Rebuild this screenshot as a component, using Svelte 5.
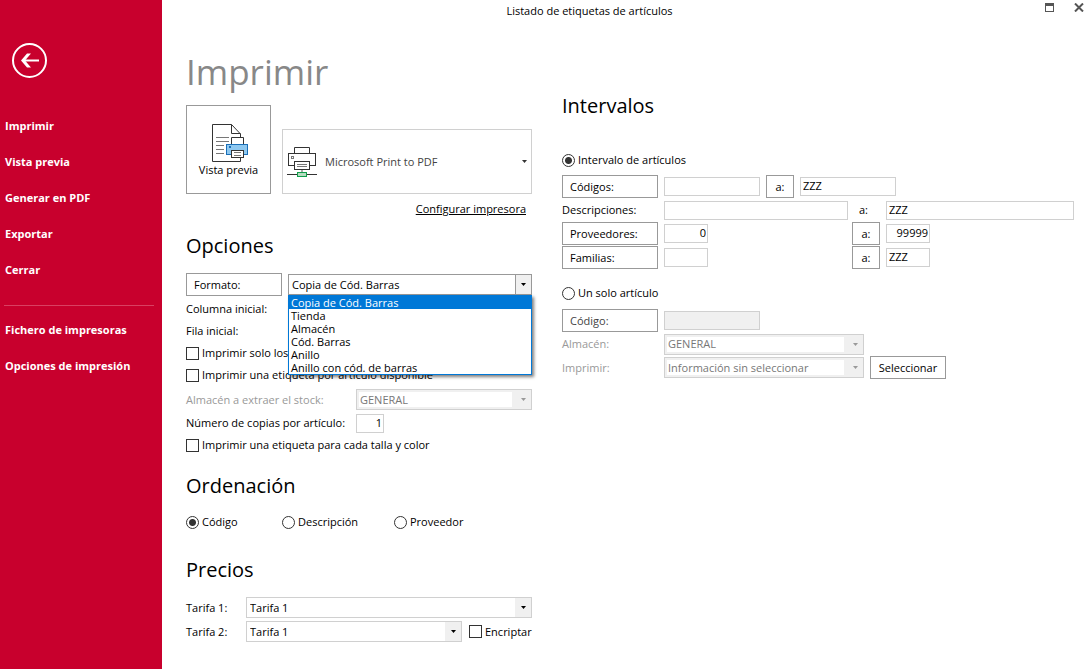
<script>
	const acciones = ['Imprimir', 'Vista previa', 'Generar en PDF', 'Exportar', 'Cerrar'];
	const ajustes = ['Fichero de impresoras', 'Opciones de impresión'];
	const formatos = ['Copia de Cód. Barras', 'Tienda', 'Almacén', 'Cód. Barras', 'Anillo', 'Anillo con cód. de barras'];
	const ordenes = ['Código', 'Descripción', 'Proveedor'];

	let formato = $state(formatos[0]);
	let listaAbierta = $state(true);
	let orden = $state('Código');
	let intervalo = $state('varios');
	let copias = $state('1');

	const abrirLista = e => {
		e.preventDefault();
		listaAbierta = !listaAbierta;
	}

	const elegirFormato = f => {
		formato = f;
		listaAbierta = false;
	}
</script>

<div class="app">
	<aside>
		<button class="back" aria-label="Volver">
			<svg width="35" height="35" viewBox="0 0 35 35" fill="none" stroke="#fff">
				<circle cx="17.5" cy="17.5" r="16.5" stroke-width="2" />
				<path d="M27 17.5H11" stroke-width="2" />
				<path d="M9 17.5L15 10.5H19L13 17.5L19 24.5H15Z" fill="#fff" stroke="none" />
			</svg>
		</button>
		<nav>
			{#each acciones as accion}
				<a href="#menu">{accion}</a>
			{/each}
			<hr />
			{#each ajustes as ajuste}
				<a href="#menu">{ajuste}</a>
			{/each}
		</nav>
	</aside>

	<main>
		<header>
			<span class="caption">Listado de etiquetas de artículos</span>
			<button class="win" aria-label="Maximizar">
				<svg width="9" height="9" viewBox="0 0 9 9" shape-rendering="crispEdges">
					<path d="M0 0H9V9H0ZM1 3V8H8V3Z" fill="#555" fill-rule="evenodd" />
				</svg>
			</button>
			<button class="win" aria-label="Cerrar ventana">
				<svg width="10" height="9" viewBox="0 0 10 9">
					<path d="M1 .5L9 8.5M9 .5L1 8.5" stroke="#555" stroke-width="2" />
				</svg>
			</button>
		</header>

		<div class="columns">
			<div class="left">
				<h1>Imprimir</h1>
				<div class="print-row">
					<button class="preview">
						<svg width="37" height="39" viewBox="0 0 37 39" fill="none" stroke="#333">
							<path d="M.5 .5H19.5L28.5 10V37.5H.5Z" fill="#fff" />
							<path d="M19.5 .5V9.5H28.5" />
							<path d="M4 13.5H17M4 17.5H17M4 21.5H12M4 25.5H12M4 29.5H12" stroke="#777" />
							<path d="M19.5 20V13.5H31.5V20" fill="#fff" />
							<rect x="14.5" y="20.5" width="21" height="10" fill="#8ec8f0" stroke="#1a6fb8" />
							<rect x="17" y="22" width="2" height="2" fill="#1a6fb8" stroke="none" />
							<rect x="19.5" y="26.5" width="12" height="7" fill="#fff" />
							<path d="M22 28.5H29M22 31.5H29" stroke="#777" />
						</svg>
						Vista previa
					</button>
					<button class="printer">
						<svg width="30" height="30" viewBox="0 0 30 30" fill="none" stroke="#333">
							<path d="M7.5 6V.5H22.5V6" />
							<rect x="1.5" y="6.5" width="27" height="12" fill="#fff" />
							<rect x="4.5" y="9.5" width="2" height="2" stroke="#777" />
							<rect x="7.5" y="14.5" width="15" height="8" fill="#fff" />
							<path d="M10 17.5H20M10 19.5H20" stroke="#777" />
							<path d="M15 23V25" stroke="#aaa" stroke-width="2" />
							<path d="M0 27.5H30" />
							<rect x="10.5" y="25.5" width="9" height="4" fill="#b5dcc0" stroke="#0f9d4a" />
						</svg>
						<span>Microsoft Print to PDF</span>
						<svg class="caret" width="5" height="3" viewBox="0 0 5 3"><path d="M0 0H5L2.5 3Z" fill="#333" /></svg>
					</button>
				</div>
				<a class="config" href="#impresora">Configurar impresora</a>

				<section class="options">
					<h2>Opciones</h2>
					<div class="line format">
						<button class="box label">Formato:</button>
						<div class="combo">
							<select class="dark" aria-label="Formato" bind:value={formato} onmousedown={abrirLista}>
								{#each formatos as f}
									<option>{f}</option>
								{/each}
							</select>
							{#if listaAbierta}
								<ul role="listbox">
									{#each formatos as f}
										<li role="option" aria-selected={f === formato}>
											<button onclick={() => elegirFormato(f)}>{f}</button>
										</li>
									{/each}
								</ul>
							{/if}
						</div>
					</div>
					<div class="line">Columna inicial:</div>
					<div class="line">Fila inicial:</div>
					<label class="line"><input type="checkbox" /> Imprimir solo los</label>
					<label class="line"><input type="checkbox" /> Imprimir una etiqueta por artículo disponible</label>
					<div class="line stock">
						<label class="off" for="stock">Almacén a extraer el stock:</label>
						<select id="stock" disabled><option>GENERAL</option></select>
					</div>
					<div class="line">
						<label class="wide" for="copias">Número de copias por artículo:</label>
						<input class="tiny num" id="copias" type="text" bind:value={copias} />
					</div>
					<label class="line"><input type="checkbox" /> Imprimir una etiqueta para cada talla y color</label>
				</section>

				<section class="order">
					<h2>Ordenación</h2>
					<div class="radios">
						{#each ordenes as o}
							<label><input type="radio" name="orden" value={o} bind:group={orden} /> {o}</label>
						{/each}
					</div>
				</section>

				<section class="prices">
					<h2>Precios</h2>
					<div class="rate">
						<label for="tarifa1">Tarifa 1:</label>
						<select id="tarifa1"><option>Tarifa 1</option></select>
					</div>
					<div class="rate">
						<label for="tarifa2">Tarifa 2:</label>
						<select id="tarifa2"><option>Tarifa 1</option></select>
						<label class="encrypt"><input type="checkbox" /> Encriptar</label>
					</div>
				</section>
			</div>

			<div class="right">
				<h2>Intervalos</h2>
				<label class="choice"><input type="radio" name="intervalo" value="varios" bind:group={intervalo} /> Intervalo de artículos</label>
				<div class="ranges">
					<div class="range">
						<button class="box label">Códigos:</button>
						<input class="mid" type="text" aria-label="Códigos desde" />
						<button class="box to">a:</button>
						<input class="mid" type="text" aria-label="Códigos hasta" value="ZZZ" />
					</div>
					<div class="range plain">
						<label class="label" for="desde">Descripciones:</label>
						<div class="from"><input class="full" id="desde" type="text" /></div>
						<label class="to" for="hasta">a:</label>
						<input class="full" id="hasta" type="text" value="ZZZ" />
					</div>
					<div class="range">
						<button class="box label">Proveedores:</button>
						<div class="from"><input class="small num" type="text" aria-label="Proveedores desde" value="0" /></div>
						<button class="box to">a:</button>
						<input class="small num" type="text" aria-label="Proveedores hasta" value="99999" />
					</div>
					<div class="range">
						<button class="box label">Familias:</button>
						<div class="from"><input class="small" type="text" aria-label="Familias desde" /></div>
						<button class="box to">a:</button>
						<input class="small" type="text" aria-label="Familias hasta" value="ZZZ" />
					</div>
				</div>

				<label class="choice single"><input type="radio" name="intervalo" value="uno" bind:group={intervalo} /> Un solo artículo</label>
				<div class="ranges">
					<div class="range">
						<button class="box label" disabled>Código:</button>
						<input class="mid" type="text" aria-label="Código" disabled />
					</div>
					<div class="range plain">
						<label class="label off" for="almacen">Almacén:</label>
						<select class="pick" id="almacen" disabled><option>GENERAL</option></select>
					</div>
					<div class="range">
						<label class="label off" for="info">Imprimir:</label>
						<select class="pick" id="info" disabled><option>Información sin seleccionar</option></select>
						<button class="box choose">Seleccionar</button>
					</div>
				</div>
			</div>
		</div>
	</main>
</div>

<style>
	:global(body) {
		background: #fff;
	}

	.app {
		display: flex;
		min-height: 100vh;
		font-family: "Open Sans", "Noto Sans", sans-serif;
		font-size: 11px;
		line-height: 16px;
		color: #000;
	}

	.app * {
		box-sizing: border-box;
	}

	button, input, select {
		font: inherit;
		color: inherit;
		margin: 0;
	}

	button {
		padding: 0;
		border: none;
		background: none;
	}

	aside {
		flex: none;
		width: 162px;
		padding-top: 43px;
		background: #c8002d;
	}

	.back {
		display: block;
		width: 35px;
		height: 35px;
		margin-left: 12px;
	}

	nav {
		margin-top: 30px;
	}

	nav a {
		display: block;
		padding-left: 5px;
		font-weight: 700;
		line-height: 36px;
		color: #fff;
		text-decoration: none;
	}

	hr {
		height: 1px;
		margin: 17px 8px 6px 4px;
		border: none;
		background: #d94062;
	}

	main {
		flex: 1;
		min-width: 0;
	}

	header {
		display: flex;
		height: 22px;
		padding-right: 2px;
	}

	.caption {
		flex: 1;
		padding-right: 12px;
		line-height: 22px;
		text-align: center;
	}

	.win {
		width: 29px;
		padding: 3px 0 0 16px;
		text-align: left;
	}

	.win svg {
		display: block;
		height: 9px;
		margin-bottom: 10px;
	}

	.columns {
		display: grid;
		grid-template-columns: 346fr 512fr;
		gap: 30px;
		padding: 0 15px 24px 24px;
	}

	h1, h2 {
		margin: 0;
		font-weight: 400;
	}

	h1 {
		height: 83px;
		padding-top: 26px;
		font-size: 35px;
		line-height: 48px;
		color: #888;
	}

	h2 {
		font-size: 20px;
		line-height: 28px;
	}

	.print-row {
		display: flex;
		align-items: flex-end;
		gap: 11px;
	}

	.preview {
		display: flex;
		flex-direction: column;
		align-items: center;
		width: 85px;
		height: 89px;
		padding-top: 18px;
		border: 1px solid #999;
	}

	.preview svg {
		flex: none;
		margin: 0 0 -1px 4px;
	}

	.printer {
		display: flex;
		flex: 1;
		align-items: center;
		gap: 8px;
		height: 65px;
		padding: 0 4px;
		border: 1px solid #d0d0d0;
		color: #444;
	}

	.caret {
		margin-left: auto;
	}

	.config {
		display: block;
		margin: 7px 6px 0 0;
		text-align: right;
		color: #000;
	}

	.options {
		margin-top: 15px;
	}

	.line {
		display: flex;
		align-items: center;
		height: 22px;
	}

	.format {
		gap: 6px;
		height: 23px;
		margin: 13px 0 2px;
	}

	.stock {
		height: 23px;
		margin: 2px 0 1px;
	}

	.stock label, .wide {
		flex: none;
		width: 170px;
	}

	.box {
		flex: none;
		height: 23px;
		border: 1px solid #999;
		background: #fff;
	}

	.label {
		flex: none;
		width: 96px;
	}

	.box.label {
		padding-left: 7px;
		text-align: left;
	}

	.box:disabled {
		color: #444;
	}

	.off {
		color: #999;
	}

	input[type="text"] {
		height: 19px;
		padding: 0 2px 2px;
		border: 1px solid #d0d0d0;
		border-radius: 0;
		background: #fff;
		outline: none;
	}

	input[type="text"]:disabled {
		background: #f0f0f0;
	}

	input.num {
		padding-right: 1px;
		text-align: right;
	}

	.tiny {
		width: 28px;
	}

	.small {
		width: 44px;
	}

	.mid {
		width: 96px;
	}

	.full {
		flex: 1;
		min-width: 0;
	}

	select {
		flex: 1;
		min-width: 0;
		height: 21px;
		padding: 0 20px 0 3px;
		border: 1px solid #d0d0d0;
		border-radius: 0;
		appearance: none;
		outline: none;
		background:
			url("data:image/svg+xml,%3Csvg xmlns='http://www.w3.org/2000/svg' width='5' height='3'%3E%3Cpath d='M0 0H5L2.5 3Z'/%3E%3C/svg%3E") right 5px center no-repeat,
			linear-gradient(#f0f0f0, #f0f0f0) right / 16px 100% no-repeat,
			#fff;
	}

	select:disabled {
		opacity: 1;
		color: #777;
		background:
			url("data:image/svg+xml,%3Csvg xmlns='http://www.w3.org/2000/svg' width='5' height='3'%3E%3Cpath fill='%23999' d='M0 0H5L2.5 3Z'/%3E%3C/svg%3E") right 5px center no-repeat,
			linear-gradient(#fff, #fff) 2px 2px / calc(100% - 21px) 15px no-repeat,
			#f0f0f0;
	}

	select.dark {
		width: 100%;
		border-color: #999;
		background:
			url("data:image/svg+xml,%3Csvg xmlns='http://www.w3.org/2000/svg' width='5' height='3'%3E%3Cpath d='M0 0H5L2.5 3Z'/%3E%3C/svg%3E") right 5px center no-repeat,
			linear-gradient(90deg, #999 1px, #f0f0f0 1px) right / 16px 100% no-repeat,
			#fff;
	}

	.combo {
		position: relative;
		display: flex;
		flex: 1;
	}

	/* the open list drops over the rows below */
	ul {
		position: absolute;
		z-index: 1;
		top: 100%;
		left: 0;
		right: 0;
		margin: 0;
		padding: 0;
		border: 1px solid #0078d7;
		background: #fff;
		box-shadow: 2px 2px 3px rgba(0, 0, 0, 0.5);
		list-style: none;
	}

	li button {
		display: block;
		width: 100%;
		height: 13px;
		padding-left: 2px;
		line-height: 13px;
		text-align: left;
	}

	li[aria-selected="true"] {
		background: #0078d7;
		color: #fff;
	}

	input[type="checkbox"], input[type="radio"] {
		flex: none;
		width: 13px;
		height: 13px;
		margin-right: 3px;
		border: 1px solid #333;
		appearance: none;
		background: #fff;
	}

	input[type="radio"] {
		border-radius: 50%;
	}

	input[type="radio"]:checked {
		background: radial-gradient(circle, #333 3px, #fff 4px);
	}

	input[type="checkbox"]:checked {
		background: #333;
		box-shadow: inset 0 0 0 2px #fff;
	}

	.order {
		margin-top: 16px;
	}

	.radios {
		display: grid;
		grid-template-columns: 96px 112px 1fr;
		margin-top: 14px;
	}

	.radios label, .encrypt, .choice {
		display: flex;
		align-items: center;
	}

	.prices {
		margin-top: 26px;
	}

	.prices h2 {
		margin-bottom: 13px;
	}

	.rate {
		display: flex;
		align-items: center;
		margin-bottom: 3px;
	}

	.rate > label:first-child {
		flex: none;
		width: 60px;
	}

	.encrypt {
		flex: none;
		width: 70px;
		padding-left: 7px;
	}

	.right h2 {
		margin-top: 70px;
	}

	.choice {
		margin: 32px 0 7px;
	}

	.single {
		margin: 16px 0 8px;
	}

	.ranges {
		display: flex;
		flex-direction: column;
		gap: 1px;
	}

	.range {
		display: flex;
		align-items: center;
		gap: 6px;
		height: 23px;
	}

	.plain {
		height: 22px;
	}

	.to {
		flex: none;
		width: 28px;
		text-align: center;
	}

	label.to {
		padding-left: 7px;
		text-align: left;
	}

	.from {
		display: flex;
		flex: none;
		width: 184px;
		margin-right: -2px;
	}

	.pick {
		flex: none;
		width: 200px;
	}

	.choose {
		width: 76px;
	}
</style>
